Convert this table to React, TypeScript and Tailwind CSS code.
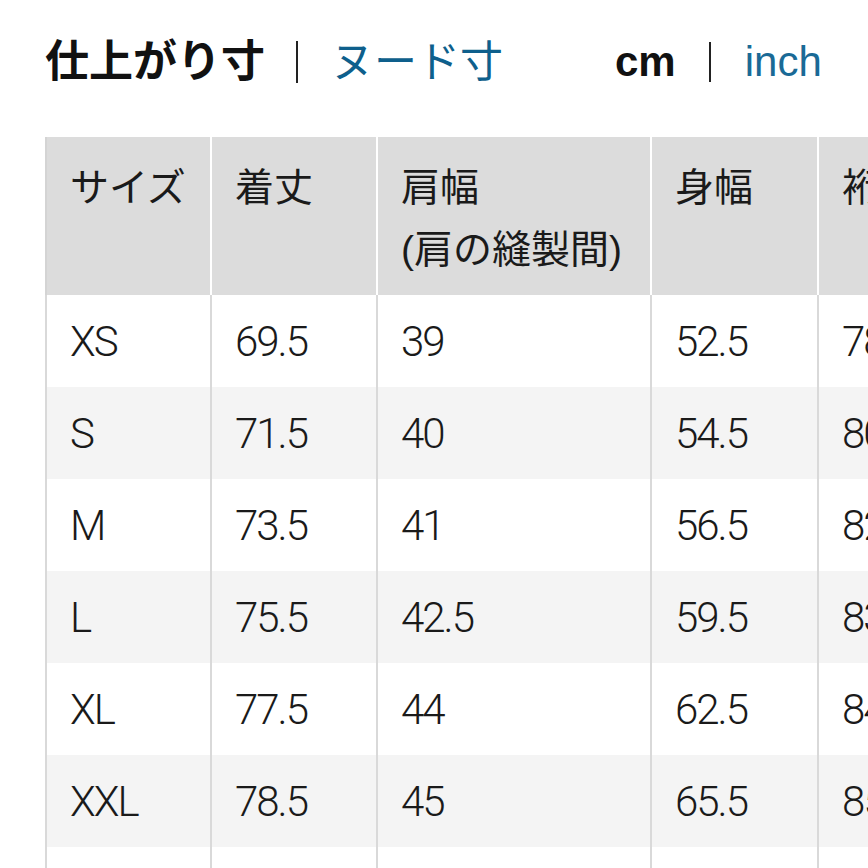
import React from "react";

const jp = { fontFamily: '"Liberation Sans", "Noto Sans CJK JP", sans-serif' };
const num = { fontFamily: 'Roboto, "Noto Sans CJK JP", sans-serif' };

const headers: React.ReactNode[] = [
  "サイズ",
  "着丈",
  <>
    肩幅
    <br />
    (肩の縫製間)
  </>,
  "身幅",
  "裄丈",
];

const rows = [
  ["XS", "69.5", "39", "52.5", "78"],
  ["S", "71.5", "40", "54.5", "80"],
  ["M", "73.5", "41", "56.5", "82"],
  ["L", "75.5", "42.5", "59.5", "83"],
  ["XL", "77.5", "44", "62.5", "84"],
  ["XXL", "78.5", "45", "65.5", "85"],
  ["", "", "", "", ""],
];

export default function App() {
  return (
    <div className="w-[868px] h-[868px] overflow-hidden bg-white" style={jp}>
      <div className="flex items-start pl-[45px] pt-[38px] h-[137px]">
        <div className="flex items-center h-[48px] shrink-0">
          <span className="text-[44px] leading-[48px] font-bold text-[#111] whitespace-nowrap">仕上がり寸</span>
          <span className="ml-[31px] w-[2px] h-[42px] bg-[#222]" />
          <span className="ml-[33px] text-[43px] leading-[48px] text-[#0e5f8c] whitespace-nowrap">ヌード寸</span>
        </div>
        <div className="flex items-center h-[48px] ml-[112px] shrink-0">
          <span className="text-[42px] leading-[48px] font-bold text-[#111]">cm</span>
          <span className="ml-[33px] w-[2px] h-[40px] bg-[#222]" />
          <span className="ml-[34px] text-[42px] leading-[48px] text-[#1a6a96]">inch</span>
        </div>
      </div>
      <div className="ml-[45px] grid grid-cols-[165px_166px_274px_167px_200px] w-[972px]">
        {headers.map((h, i) => (
          <div
            key={i}
            className={`h-[158px] bg-[#dcdcdc] pl-[23px] pt-[20px] text-[39px] leading-[62px] text-[#1a1a1a] whitespace-nowrap ${
              i === 0 ? "border-l-2 border-[#d4d4d4]" : "border-l-2 border-white"
            }`}
          >
            {h}
          </div>
        ))}
        {rows.map((r, ri) =>
          r.map((c, ci) => (
            <div
              key={ri + "-" + ci}
              className={`h-[92px] flex items-center pl-[23px] border-l-2 border-[#d9d9d9] text-[42px] font-light text-[#1a1a1a] tracking-[-2px] ${
                ri % 2 === 1 ? "bg-[#f4f4f4]" : "bg-white"
              }`}
              style={num}
            >
              {c}
            </div>
          ))
        )}
      </div>
    </div>
  );
}
